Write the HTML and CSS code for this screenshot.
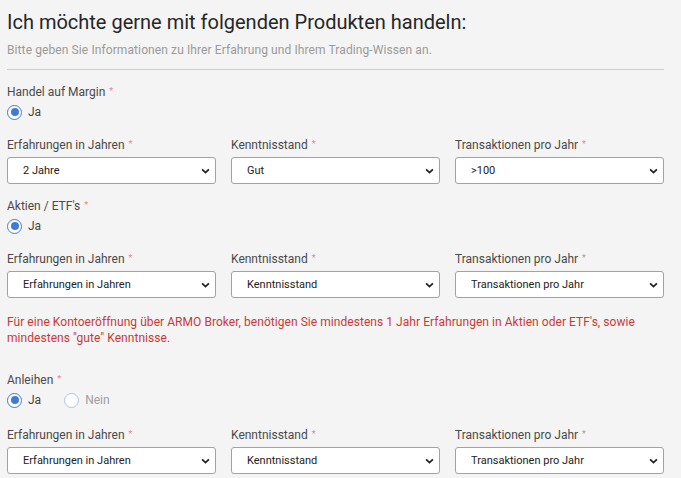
FILE: index.html
```html
<!DOCTYPE html>
<html lang="de">
<head>
<meta charset="utf-8">
<title>Produkte</title>
<link rel="stylesheet" href="styles.css">
</head>
<body>
<div class="page">
  <h1 class="title">Ich möchte gerne mit folgenden Produkten handeln:</h1>
  <p class="subtitle">Bitte geben Sie Informationen zu Ihrer Erfahrung und Ihrem Trading-Wissen an.</p>
  <hr class="divider">

  <section class="product">
    <div class="q-label">Handel auf Margin <span class="req">*</span></div>
    <div class="radios">
      <label class="radio"><span class="circle checked"></span><span class="r-text">Ja</span></label>
    </div>
    <div class="fields">
      <div class="field">
        <div class="f-label">Erfahrungen in Jahren <span class="req">*</span></div>
        <div class="select"><span>2 Jahre</span><svg class="chev" viewBox="0 0 10 6"><path d="M1.2 1.2l3.8 3.6 3.8-3.6"/></svg></div>
      </div>
      <div class="field">
        <div class="f-label">Kenntnisstand <span class="req">*</span></div>
        <div class="select"><span>Gut</span><svg class="chev" viewBox="0 0 10 6"><path d="M1.2 1.2l3.8 3.6 3.8-3.6"/></svg></div>
      </div>
      <div class="field">
        <div class="f-label">Transaktionen pro Jahr <span class="req">*</span></div>
        <div class="select"><span>&gt;100</span><svg class="chev" viewBox="0 0 10 6"><path d="M1.2 1.2l3.8 3.6 3.8-3.6"/></svg></div>
      </div>
    </div>
  </section>

  <section class="product">
    <div class="q-label">Aktien / ETF's <span class="req">*</span></div>
    <div class="radios">
      <label class="radio"><span class="circle checked"></span><span class="r-text">Ja</span></label>
    </div>
    <div class="fields">
      <div class="field">
        <div class="f-label">Erfahrungen in Jahren <span class="req">*</span></div>
        <div class="select"><span>Erfahrungen in Jahren</span><svg class="chev" viewBox="0 0 10 6"><path d="M1.2 1.2l3.8 3.6 3.8-3.6"/></svg></div>
      </div>
      <div class="field">
        <div class="f-label">Kenntnisstand <span class="req">*</span></div>
        <div class="select"><span>Kenntnisstand</span><svg class="chev" viewBox="0 0 10 6"><path d="M1.2 1.2l3.8 3.6 3.8-3.6"/></svg></div>
      </div>
      <div class="field">
        <div class="f-label">Transaktionen pro Jahr <span class="req">*</span></div>
        <div class="select"><span>Transaktionen pro Jahr</span><svg class="chev" viewBox="0 0 10 6"><path d="M1.2 1.2l3.8 3.6 3.8-3.6"/></svg></div>
      </div>
    </div>
    <p class="error">Für eine Kontoeröffnung über ARMO Broker, benötigen Sie mindestens 1 Jahr Erfahrungen in Aktien oder ETF's, sowie mindestens "gute" Kenntnisse.</p>
  </section>

  <section class="product after-error">
    <div class="q-label">Anleihen <span class="req">*</span></div>
    <div class="radios">
      <label class="radio"><span class="circle checked"></span><span class="r-text">Ja</span></label>
      <label class="radio"><span class="circle"></span><span class="r-text off">Nein</span></label>
    </div>
    <div class="fields">
      <div class="field">
        <div class="f-label">Erfahrungen in Jahren <span class="req">*</span></div>
        <div class="select"><span>Erfahrungen in Jahren</span><svg class="chev" viewBox="0 0 10 6"><path d="M1.2 1.2l3.8 3.6 3.8-3.6"/></svg></div>
      </div>
      <div class="field">
        <div class="f-label">Kenntnisstand <span class="req">*</span></div>
        <div class="select"><span>Kenntnisstand</span><svg class="chev" viewBox="0 0 10 6"><path d="M1.2 1.2l3.8 3.6 3.8-3.6"/></svg></div>
      </div>
      <div class="field">
        <div class="f-label">Transaktionen pro Jahr <span class="req">*</span></div>
        <div class="select"><span>Transaktionen pro Jahr</span><svg class="chev" viewBox="0 0 10 6"><path d="M1.2 1.2l3.8 3.6 3.8-3.6"/></svg></div>
      </div>
    </div>
  </section>
</div>
</body>
</html>
```
FILE: styles.css
```css
html, body {
  margin: 0;
  padding: 0;
  background: #f4f4f4;
}
body {
  font-family: Roboto, "Liberation Sans", Arial, sans-serif;
  color: #444;
}
.page {
  width: 657px;
  padding: 10px 0 0 7px;
  display: flex;
  flex-direction: column;
}
.title {
  margin: 0;
  font-size: 20px;
  line-height: 24px;
  font-weight: 400;
  color: #262626;
}
.subtitle {
  margin: 8px 0 0;
  font-size: 12px;
  line-height: 16px;
  color: #9a9a9a;
  letter-spacing: 0.1px;
}
.divider {
  margin: 11px 0 0;
  border: 0;
  border-top: 1px solid #cfcfcf;
  height: 0;
}
.product {
  display: flex;
  flex-direction: column;
  margin-top: 13px;
}
.product.after-error {
  margin-top: 25px;
}
.product.after-error .fields {
  margin-top: 18px;
}
.q-label {
  font-size: 12px;
  line-height: 16px;
  color: #4a4a4a;
}
.req {
  color: #e08a8a;
  font-size: 9px;
  vertical-align: 2px;
  margin-left: 1px;
}
.radios {
  display: flex;
  gap: 23px;
  margin-top: 4px;
  height: 16px;
  align-items: center;
}
.radio {
  display: flex;
  align-items: center;
  gap: 6px;
  font-size: 12px;
  color: #444;
}
.circle {
  width: 13px;
  height: 13px;
  border: 1.5px solid #a9c3e6;
  border-radius: 50%;
  background: #fff;
  box-sizing: content-box;
  position: relative;
}
.circle.checked {
  border-color: #3f7bd6;
}
.circle.checked::after {
  content: "";
  position: absolute;
  left: 2.5px;
  top: 2.5px;
  width: 8px;
  height: 8px;
  border-radius: 50%;
  background: #3f7bd6;
}
.r-text.off {
  color: #a0a0a0;
}
.fields {
  display: grid;
  grid-template-columns: repeat(3, 1fr);
  column-gap: 15px;
  margin-top: 16px;
}
.f-label {
  font-size: 12px;
  line-height: 16px;
  color: #4a4a4a;
  margin-bottom: 4px;
}
.select {
  height: 25px;
  border: 1px solid #a2a2a2;
  border-radius: 3px;
  background: #fff;
  display: flex;
  align-items: center;
  justify-content: space-between;
  padding: 0 5px 0 15px;
  font-family: Roboto, "Liberation Sans", Arial, sans-serif;
  font-size: 11px;
  color: #222;
}
.chev {
  width: 9px;
  height: 6px;
  fill: none;
  stroke: #222;
  stroke-width: 2;
}
.error {
  margin: 16px 0 0;
  font-size: 12px;
  line-height: 16px;
  color: #c93a36;
  letter-spacing: 0.05px;
}
```
